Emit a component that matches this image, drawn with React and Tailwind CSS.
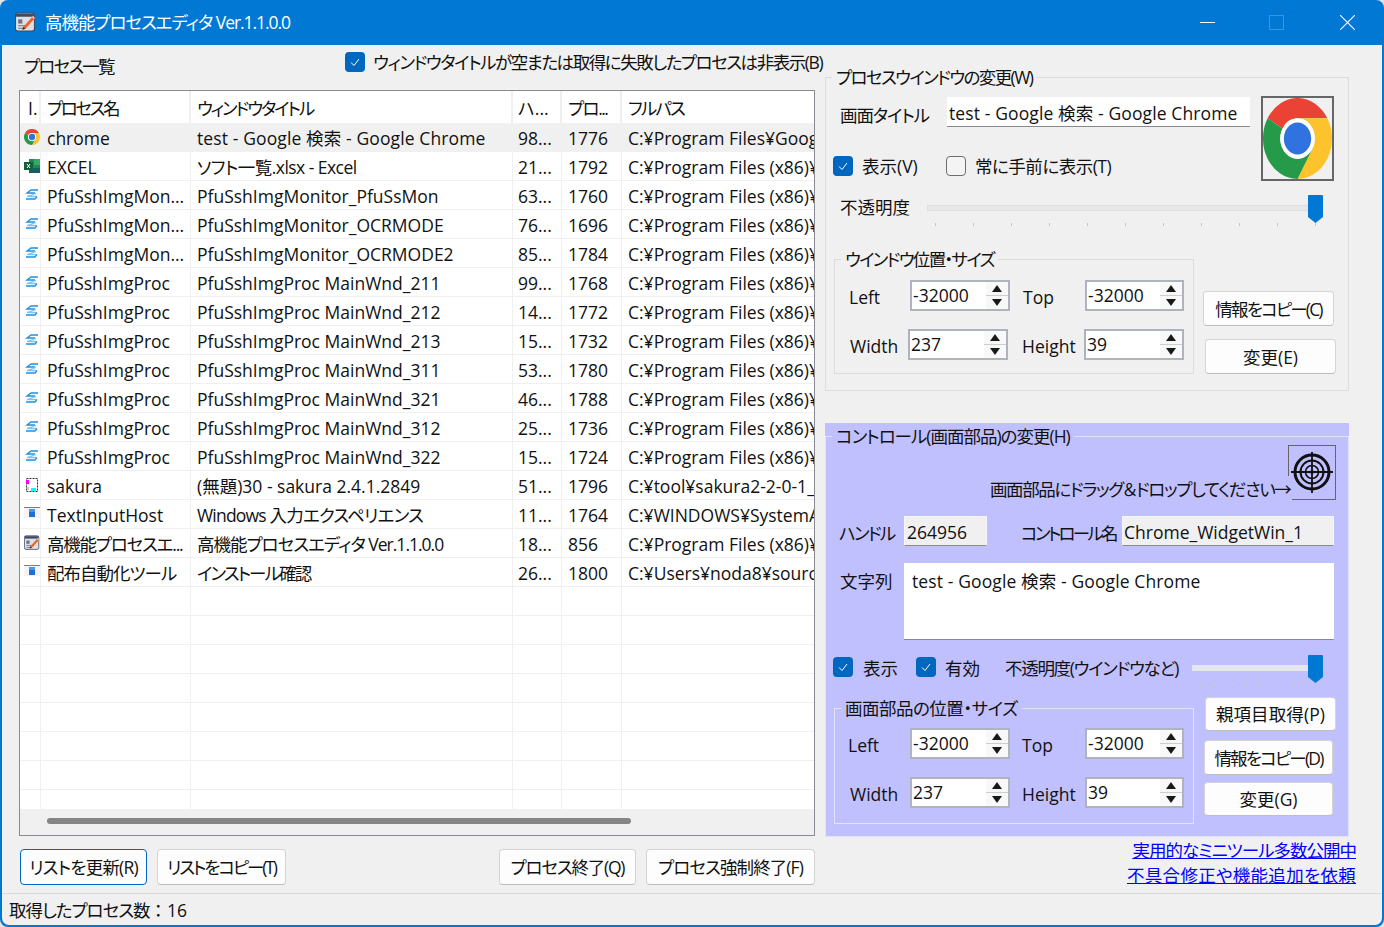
import React from "react";

const pfuPath = "C:¥Program Files (x86)¥PFU¥ScanSnap";

// r[6] / r[7]: letter spacing of the name and title columns for the rows with kana
const rows = [
  ["chrome", "chrome", "test - Google 検索 - Google Chrome", "98...", "1776", "C:¥Program Files¥Google¥Chrome¥Application", "", "tracking-[0.12px]"],
  ["excel", "EXCEL", "ソフト一覧.xlsx - Excel", "21...", "1792", "C:¥Program Files (x86)¥Microsoft Office", "", "tracking-[-0.55px]"],
  ["pfu", "PfuSshImgMon...", "PfuSshImgMonitor_PfuSsMon", "63...", "1760", pfuPath],
  ["pfu", "PfuSshImgMon...", "PfuSshImgMonitor_OCRMODE", "76...", "1696", pfuPath],
  ["pfu", "PfuSshImgMon...", "PfuSshImgMonitor_OCRMODE2", "85...", "1784", pfuPath],
  ["pfu", "PfuSshImgProc", "PfuSshImgProc MainWnd_211", "99...", "1768", pfuPath],
  ["pfu", "PfuSshImgProc", "PfuSshImgProc MainWnd_212", "14...", "1772", pfuPath],
  ["pfu", "PfuSshImgProc", "PfuSshImgProc MainWnd_213", "15...", "1732", pfuPath],
  ["pfu", "PfuSshImgProc", "PfuSshImgProc MainWnd_311", "53...", "1780", pfuPath],
  ["pfu", "PfuSshImgProc", "PfuSshImgProc MainWnd_321", "46...", "1788", pfuPath],
  ["pfu", "PfuSshImgProc", "PfuSshImgProc MainWnd_312", "25...", "1736", pfuPath],
  ["pfu", "PfuSshImgProc", "PfuSshImgProc MainWnd_322", "15...", "1724", pfuPath],
  ["sakura", "sakura", "(無題)30 - sakura 2.4.1.2849", "51...", "1796", "C:¥tool¥sakura2-2-0-1_x64¥sakura.exe"],
  ["host", "TextInputHost", "Windows 入力エクスペリエンス", "11...", "1764", "C:¥WINDOWS¥SystemApps¥MicrosoftWindows", "", "tracking-[-0.8px]"],
  ["app", "高機能プロセスエ...", "高機能プロセスエディタ Ver.1.1.0.0", "18...", "856", "C:¥Program Files (x86)¥ProcessEditor", "tracking-[-1.2px]", "tracking-[-1px]"],
  ["host", "配布自動化ツール", "インストール確認", "26...", "1800", "C:¥Users¥noda8¥source¥repos¥Deploy", "tracking-[-1px]", "tracking-[-1.9px]"],
  [], [], [], [], [], [], [], [],
];

const gridCols = "grid grid-cols-[21px_150px_322px_49px_60px_1fr]";

const ChromeLogo = ({ className }) => (
  <svg viewBox="0 0 48 48" preserveAspectRatio="none" className={className}>
    <path d="M3.2 12A24 24 0 0 1 44.78 12L24 12A12 12 0 0 0 13.6 18Z" fill="#ea4335" />
    <path d="M44.78 12A24 24 0 0 1 24 48L34.4 30A12 12 0 0 0 24 12Z" fill="#fcc32c" />
    <path d="M24 48A24 24 0 0 1 3.2 12L13.6 18A12 12 0 0 0 34.4 30Z" fill="#259a48" />
    <circle cx="24" cy="24" r="12" fill="#fff" />
    <circle cx="24" cy="24" r="9.5" fill="#2f72e0" />
  </svg>
);

const AppIcon = ({ className }) => (
  <svg viewBox="0 0 20 20" className={className}>
    <rect x="0.5" y="1" width="18" height="17" rx="2" fill="#dfe0e6" stroke="#3d4a63" />
    <rect x="1" y="1.5" width="17" height="3" fill="#3d4a63" />
    <rect x="3" y="7" width="4" height="4" fill="#6a7488" />
    <path d="M3 13h9M3 15.5h7" stroke="#6a7488" strokeWidth="1" />
    <path d="M8 14l9-10 2 2-9 10-3 1z" fill="#e8642c" />
    <path d="M16 5l1-1.5 2 2-1 1.5z" fill="#f4b6a0" />
    <path d="M7 17l1-3 2 2z" fill="#333" />
  </svg>
);

const RowIcon = ({ type }) => {
  if (type === "chrome") return <ChromeLogo className="w-4 h-4" />;
  if (type === "app") return <AppIcon className="w-4 h-4" />;
  if (type === "excel")
    return (
      <svg viewBox="0 0 16 16" className="w-4 h-4">
        <rect x="5" y="1" width="11" height="14" fill="#1f8a4c" />
        <rect x="10" y="1" width="6" height="6" fill="#34a866" />
        <rect x="5" y="10" width="11" height="5" fill="#155f68" />
        <rect x="0" y="4" width="9" height="8" fill="#12603a" />
        <path d="M3 6l3 4M6 6l-3 4" stroke="#fff" strokeWidth="1" />
      </svg>
    );
  if (type === "pfu")
    return (
      <svg viewBox="0 0 16 16" className="w-4 h-4" fill="none" stroke="#1f8fe0" strokeWidth="1.3">
        <path d="M14 3H7L3 6h8" />
        <path d="M12 6.5L3 9.5h9" stroke="#7cc4f2" />
        <path d="M13 9.5l-2 2.5H2" />
      </svg>
    );
  if (type === "sakura")
    return (
      <svg viewBox="0 0 16 16" className="w-4 h-4">
        <rect x="2.5" y="1.5" width="11" height="13" fill="#fff" stroke="#333" strokeDasharray="2 1" />
        <rect x="2" y="3" width="3" height="4" fill="#f0f" />
        <rect x="7" y="11" width="5" height="3" fill="#0ff" />
        <rect x="3" y="10" width="2" height="3" fill="#ccc" />
      </svg>
    );
  return (
    <svg viewBox="0 0 16 16" className="w-4 h-4">
      <rect x="0" y="1" width="16" height="1" fill="#8a7a70" />
      <rect x="0" y="2" width="16" height="10" fill="#f4f4f4" />
      <rect x="5" y="3" width="6" height="8" fill="#1f6fd0" />
      <rect x="5" y="3" width="6" height="3" fill="#4a98ea" />
    </svg>
  );
};

const Check = ({ on = true, className = "" }) =>
  on ? (
    <span className={`flex items-center justify-center w-[20px] h-[20px] shrink-0 rounded-[4px] bg-[#0067c0] ${className}`}>
      <svg viewBox="0 0 12 12" className="w-[12px] h-[12px]" fill="none" stroke="#fff" strokeWidth="1">
        <path d="M2 6.5l3 3 5-6.5" />
      </svg>
    </span>
  ) : (
    <span className={`block w-[20px] h-[20px] shrink-0 rounded-[4px] border border-[#6e6e6e] bg-[#f4f4f4] ${className}`} />
  );

const Btn = ({ children, focus = false, className = "" }) => (
  <div
    className={`flex items-center justify-center shrink-0 bg-[#fdfdfd] border rounded-[4px] whitespace-nowrap ${
      focus ? "border-[#0067c0]" : "border-[#d4d4d4] border-b-[#bdbdbd]"
    } ${className}`}
  >
    {children}
  </div>
);

const Spin = ({ value, className = "" }) => (
  <div className={`flex shrink-0 h-[31px] bg-white border-2 border-[#b0b3bc] leading-[26px] ${className}`}>
    <div className="flex-1 pl-[1px]">{value}</div>
    <div className="flex flex-col w-[22px] shrink-0">
      <div className="flex-1 flex items-center justify-center bg-[#f8f8f8] border-b border-[#c8d0cc]">
        <svg viewBox="0 0 10 7" className="w-[10px] h-[7px]"><path d="M5 0l5 7H0z" fill="#1a1a1a" /></svg>
      </div>
      <div className="flex-1 flex items-center justify-center bg-[#f8f8f8]">
        <svg viewBox="0 0 10 7" className="w-[10px] h-[7px]"><path d="M5 7l5-7H0z" fill="#1a1a1a" /></svg>
      </div>
    </div>
  </div>
);

const Slider = ({ width, track }) => (
  <div className={`relative h-[36px] shrink-0 ${width}`}>
    <div className={`h-[6px] mt-[10px] ${track}`} />
    <div className="flex justify-between pl-[8px] pr-[7px] mt-[12px]">
      {Array.from({ length: 11 }).map((_, i) => (
        <span key={i} className="block w-px h-[3px] bg-[#c4c4c4]" />
      ))}
    </div>
    <svg viewBox="0 0 15 28" className="absolute right-0 top-0 w-[15px] h-[28px]">
      <path d="M0 1a1 1 0 0 1 1-1h13a1 1 0 0 1 1 1v21l-7.5 6L0 22z" fill="#0078d4" />
    </svg>
  </div>
);

const Label = ({ children, className = "" }) => (
  <span className={`block shrink-0 whitespace-nowrap ${className}`}>{children}</span>
);

const PosGroup = ({ title, legendClass, height, rowTop, row1, row2 }) => (
  <fieldset className={`w-[360px] shrink-0 border border-[#dcdcdc] ${height}`}>
    <legend className={`ml-[6px] px-[4px] leading-[26px] ${legendClass}`}>{title}</legend>
    <div className={`flex items-center ${rowTop}`}>{row1}</div>
    <div className="flex items-center mt-[18px]">{row2}</div>
  </fieldset>
);

export default function App() {
  return (
    <div className="w-[1384px] h-[927px] bg-[#e4e4e4] overflow-hidden text-[17.5px] leading-[26px] text-[#111] [font-family:'Open_Sans','Noto_Sans_CJK_JP',sans-serif] [font-feature-settings:'palt']">
      <div className="w-full h-full rounded-[8px] bg-[#0078d4] px-[2px] pb-[2px] flex flex-col overflow-hidden">
        {/* title bar */}
        <div className="h-[45px] shrink-0 flex items-center text-white">
          <AppIcon className="w-[21px] h-[21px] ml-[13px] mb-[1px]" />
          <span className="ml-[9px] mb-[2px] whitespace-nowrap tracking-[-1.05px]">高機能プロセスエディタ Ver.1.1.0.0</span>
          <div className="flex-1" />
          <span className="block w-[15px] h-px bg-white" />
          <span className="block w-[15px] h-[15px] ml-[54px] border border-[#3b97dd]" />
          <svg viewBox="0 0 15 15" className="w-[15px] h-[15px] ml-[56px] mr-[27px]" stroke="#fff" strokeWidth="1.1">
            <path d="M0 0l15 15M15 0L0 15" />
          </svg>
        </div>

        <div className="flex-1 bg-[#f0f0f0] rounded-b-[7px] flex flex-col overflow-hidden">
          <div className="h-[848px] flex shrink-0">
            {/* process list */}
            <div className="w-[823px] shrink-0">
              <div className="h-[45px] flex pl-[22px]">
                <Label className="mt-[8px] w-[321px] tracking-[-1.8px]">プロセス一覧</Label>
                <Check className="mt-[7px]" />
                <Label className="ml-[8px] mt-[4px] tracking-[-1.45px]">ウィンドウタイトルが空または取得に失敗したプロセスは非表示(B)</Label>
              </div>
              <div className="ml-[17px] w-[796px] h-[746px] border border-[#8a8a94] bg-white flex flex-col">
                <div className={`${gridCols} h-[32px] shrink-0 leading-[34px]`}>
                  <div className="pl-[8px] border-r-2 border-[#efefef]">I.</div>
                  <div className="pl-[6px] border-r-2 border-[#efefef] tracking-[-2.4px]">プロセス名</div>
                  <div className="pl-[6px] border-r-2 border-[#efefef] tracking-[-2.1px]">ウィンドウタイトル</div>
                  <div className="pl-[5px] border-r-2 border-[#efefef]">ハ...</div>
                  <div className="pl-[6px] border-r-2 border-[#efefef] tracking-[-1.5px]">プロ...</div>
                  <div className="pl-[6px] tracking-[-1.8px]">フルパス</div>
                </div>
                <div className="flex-1 overflow-hidden">
                  {rows.map((r, i) => (
                    <div
                      key={i}
                      className={`${gridCols} h-[29px] leading-[30px] border-b border-[#f0f0f0] whitespace-nowrap ${i === 0 ? "bg-[#f0f0f0]" : ""}`}
                    >
                      <div className="pl-[4px] pt-[6px] border-r border-[#f0f0f0]">{r[0] && <RowIcon type={r[0]} />}</div>
                      <div className={`pl-[6px] overflow-hidden border-r border-[#f0f0f0] ${r[6] || ""}`}>{r[1]}</div>
                      <div className={`pl-[6px] overflow-hidden border-r border-[#f0f0f0] ${r[7] || ""}`}>{r[2]}</div>
                      <div className="pl-[5px] overflow-hidden border-r border-[#f0f0f0]">{r[3]}</div>
                      <div className="pl-[6px] overflow-hidden border-r border-[#f0f0f0]">{r[4]}</div>
                      <div className="pl-[6px] overflow-hidden">{r[5]}</div>
                    </div>
                  ))}
                </div>
                <div className="h-[26px] shrink-0 bg-[#f0f0f0] pl-[27px] pt-[9px]">
                  <div className="w-[584px] h-[6px] rounded-full bg-[#858585]" />
                </div>
              </div>
              <div className="flex mt-[13px] ml-[18px]">
                <Btn focus className="w-[127px] h-[36px] tracking-[-0.8px]">リストを更新(R)</Btn>
                <Btn className="w-[129px] h-[36px] ml-[10px] tracking-[-2.1px]">リストをコピー(T)</Btn>
                <Btn className="w-[137px] h-[36px] ml-[213px] tracking-[-1.2px]">プロセス終了(Q)</Btn>
                <Btn className="w-[169px] h-[36px] ml-[10px] tracking-[-0.9px]">プロセス強制終了(F)</Btn>
              </div>
            </div>

            {/* right panels */}
            <div className="flex-1 min-w-0">
              <fieldset className="w-[524px] h-[327px] mt-[19px] border border-[#dcdcdc]">
                <legend className="ml-[6px] px-[4px] leading-[26px] tracking-[-1.6px]">プロセスウインドウの変更(W)</legend>
                <div className="flex mt-[6px]">
                  <div className="w-[435px] shrink-0">
                    <div className="flex items-center">
                      <Label className="ml-[14px] w-[107px] mt-[6px] tracking-[-1.1px]">画面タイトル</Label>
                      <div className="w-[303px] h-[30px] bg-white border-b border-[#8a8a8a] pl-[2px] leading-[32px] whitespace-nowrap tracking-[0.12px]">
                        test - Google 検索 - Google Chrome
                      </div>
                    </div>
                    <div className="flex items-center mt-[25px]">
                      <Check className="ml-[7px]" />
                      <Label className="ml-[9px] w-[84px]">表示(V)</Label>
                      <Check on={false} />
                      <Label className="ml-[9px] tracking-[-0.5px]">常に手前に表示(T)</Label>
                    </div>
                  </div>
                  <div className="w-[73px] h-[85px] border-2 border-[#666] overflow-hidden">
                    <ChromeLogo className="w-full h-full" />
                  </div>
                </div>
                <div className="flex mt-[14px]">
                  <Label className="ml-[14px] w-[87px] -mt-px">不透明度</Label>
                  <Slider width="w-[396px]" track="bg-[#e6e9e7] border border-[#dde0de]" />
                </div>
                <div className="flex ml-[8px] mt-[15px]">
                  <PosGroup
                    title="ウインドウ位置・サイズ"
                    legendClass="tracking-[-1.7px]"
                    height="h-[128px]"
                    rowTop="mt-[8px]"
                    row1={
                      <>
                        <Label className="ml-[14px] w-[61px] mt-[3px]">Left</Label>
                        <Spin value="-32000" className="w-[100px]" />
                        <Label className="ml-[13px] w-[62px] mt-[3px]">Top</Label>
                        <Spin value="-32000" className="w-[99px]" />
                      </>
                    }
                    row2={
                      <>
                        <Label className="ml-[15px] w-[58px] mt-[3px]">Width</Label>
                        <Spin value="237" className="w-[100px]" />
                        <Label className="ml-[14px] w-[62px] mt-[3px]">Height</Label>
                        <Spin value="39" className="w-[100px]" />
                      </>
                    }
                  />
                  <div className="ml-[9px] pt-[45px]">
                    <Btn className="w-[131px] h-[35px] tracking-[-1.8px]">情報をコピー(C)</Btn>
                    <Btn className="w-[131px] h-[35px] ml-[2px] mt-[13px]">変更(E)</Btn>
                  </div>
                </div>
              </fieldset>

              <div className="w-[524px] h-[414px] mt-[32px] bg-[#c0c0ff]">
                <fieldset className="h-[414px] border border-[#e2e2fa]">
                  <legend className="ml-[6px] px-[4px] leading-[26px] tracking-[-1px]">コントロール(画面部品)の変更(H)</legend>
                  <div className="flex -mt-[4px] h-[55px]">
                    <div className="relative z-10 ml-[164px] w-[302px] h-[26px] mt-[31px] bg-[#c0c0ff] whitespace-nowrap tracking-[-1.4px]">
                      画面部品にドラッグ＆ドロップしてください→
                    </div>
                    <div className="-ml-[4px] w-[48px] h-[55px] border border-[#666] shrink-0">
                      <svg viewBox="0 0 46 53" className="w-[46px] h-[53px]" fill="none" stroke="#111">
                        <circle cx="23" cy="26" r="17" strokeWidth="3" />
                        <circle cx="23" cy="26" r="11.5" strokeWidth="2" />
                        <circle cx="23" cy="26" r="6.5" strokeWidth="1.6" />
                        <circle cx="23" cy="26" r="2" fill="#111" stroke="none" />
                        <path d="M23 6v41M2 26h42" strokeWidth="1.8" />
                      </svg>
                    </div>
                  </div>
                  <div className="flex items-center mt-[16px]">
                    <Label className="ml-[13px] w-[65px] mt-[3px] tracking-[-1.8px]">ハンドル</Label>
                    <div className="w-[83px] h-[30px] bg-[#f0f0f0] border border-[#f6f6fe] border-b-[#8a8a8a] pl-[2px] leading-[30px]">264956</div>
                    <Label className="ml-[34px] w-[101px] mt-[3px] tracking-[-2.7px]">コントロール名</Label>
                    <div className="w-[212px] h-[30px] bg-[#f0f0f0] border border-[#f6f6fe] border-b-[#8a8a8a] pl-[1px] leading-[30px]">Chrome_WidgetWin_1</div>
                  </div>
                  <div className="flex mt-[17px]">
                    <Label className="ml-[14px] w-[64px] mt-[5px]">文字列</Label>
                    <div className="w-[430px] h-[77px] bg-white border-b border-[#8a8a8a] pl-[8px] pt-[5px] whitespace-nowrap tracking-[0.12px]">
                      test - Google 検索 - Google Chrome
                    </div>
                  </div>
                  <div className="flex mt-[15px] h-[36px]">
                    <Check className="ml-[7px] mt-[2px]" />
                    <Label className="ml-[10px] w-[53px]">表示</Label>
                    <Check className="mt-[2px]" />
                    <Label className="ml-[9px] w-[60px]">有効</Label>
                    <Label className="w-[187px] tracking-[-1.3px]">不透明度(ウインドウなど)</Label>
                    <Slider width="w-[131px]" track="bg-[#e6e6ee]" />
                  </div>
                  <div className="flex ml-[8px] mt-[4px]">
                    <PosGroup
                      title="画面部品の位置・サイズ"
                      legendClass="tracking-[-0.5px]"
                      height="h-[129px] border-[#e2e2fa]"
                      rowTop="mt-[7px]"
                      row1={
                        <>
                          <Label className="ml-[13px] w-[62px] mt-[3px]">Left</Label>
                          <Spin value="-32000" className="w-[100px]" />
                          <Label className="ml-[12px] w-[63px] mt-[3px]">Top</Label>
                          <Spin value="-32000" className="w-[99px]" />
                        </>
                      }
                      row2={
                        <>
                          <Label className="ml-[15px] w-[60px] mt-[3px]">Width</Label>
                          <Spin value="237" className="w-[100px]" />
                          <Label className="ml-[12px] w-[63px] mt-[3px]">Height</Label>
                          <Spin value="39" className="w-[99px]" />
                        </>
                      }
                    />
                    <div className="ml-[10px] pt-[2px]">
                      <Btn className="w-[131px] h-[34px] ml-[1px] tracking-[0.1px]">親項目取得(P)</Btn>
                      <Btn className="w-[129px] h-[35px] mt-[9px] tracking-[-1.8px]">情報をコピー(D)</Btn>
                      <Btn className="w-[129px] h-[34px] mt-[7px]">変更(G)</Btn>
                    </div>
                  </div>
                </fieldset>
              </div>

              <div className="flex flex-col items-end pr-[26px] mt-[1px] leading-[25px] text-[#0000ff] underline">
                <a href="#links" className="tracking-[-1px]">実用的なミニツール多数公開中</a>
                <a href="#request" className="tracking-[0.3px]">不具合修正や機能追加を依頼</a>
              </div>
            </div>
          </div>

          {/* status bar */}
          <div className="flex-1 border-t border-[#d9d9d9] pl-[7px] pt-[3px] whitespace-nowrap">
            <span className="tracking-[-1px]">取得したプロセス数</span>
            <span className="[font-feature-settings:normal]">：</span>16
          </div>
        </div>
      </div>
    </div>
  );
}
